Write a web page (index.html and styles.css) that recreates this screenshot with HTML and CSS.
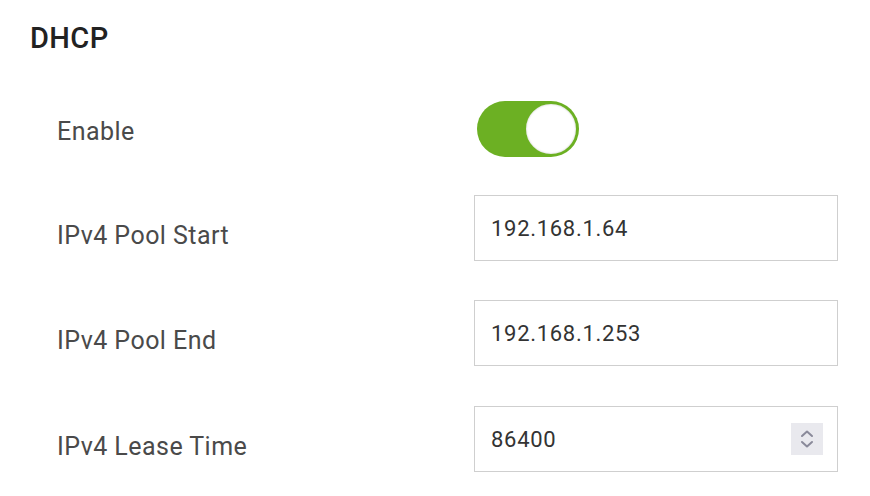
FILE: index.html
```html
<!DOCTYPE html>
<html>
<head>
<meta charset="utf-8">
<link rel="stylesheet" href="styles.css">
</head>
<body>
<div class="panel">
  <h2 class="title">DHCP</h2>
  <div class="form">
    <div class="row row-toggle">
      <div class="label">Enable</div>
      <div class="field">
        <div class="toggle"><div class="knob"></div></div>
      </div>
    </div>
    <div class="row">
      <div class="label label-input">IPv4 Pool Start</div>
      <div class="field"><div class="input">192.168.1.64</div></div>
    </div>
    <div class="row">
      <div class="label label-input">IPv4 Pool End</div>
      <div class="field"><div class="input">192.168.1.253</div></div>
    </div>
    <div class="row row-last">
      <div class="label label-input">IPv4 Lease Time</div>
      <div class="field">
        <div class="input input-number">
          <span>86400</span>
          <span class="spinner">
            <svg width="32" height="32" viewBox="0 0 32 32">
              <path d="M11 13 L16 8.5 L21 13" fill="none" stroke="#8a8a9a" stroke-width="2" stroke-linecap="round" stroke-linejoin="round"/>
              <path d="M11 19 L16 23.5 L21 19" fill="none" stroke="#8a8a9a" stroke-width="2" stroke-linecap="round" stroke-linejoin="round"/>
            </svg>
          </span>
        </div>
      </div>
    </div>
  </div>
</div>
</body>
</html>
```
FILE: styles.css
```css
html, body {
  margin: 0;
  padding: 0;
  background: #fff;
}
.panel {
  width: 870px;
  height: 496px;
  box-sizing: border-box;
  padding: 20px 0 0 30px;
  font-family: Roboto, "Noto Sans", sans-serif;
}
.title {
  margin: 0;
  font-size: 29px;
  font-weight: 500;
  line-height: 36px;
  color: #222;
  letter-spacing: 0.4px;
}
.form {
  display: flex;
  flex-direction: column;
  gap: 39px;
  margin-top: 45px;
  padding-left: 27px;
}
.row {
  display: flex;
  align-items: center;
}
.row-toggle {
  height: 56px;
  margin-bottom: -1px;
}
.row-last {
  margin-top: 1px;
}
.label {
  width: 417px;
  font-size: 25px;
  color: #4a4a4a;
  line-height: 30px;
  padding-top: 5px;
  letter-spacing: 0.45px;
}
.label-input {
  padding-top: 16px;
}
.field {
  flex: 0 0 auto;
}
.toggle {
  width: 102px;
  height: 56px;
  box-sizing: border-box;
  border-radius: 28px;
  background: #6cb023;
  margin-left: 3px;
  display: flex;
  justify-content: flex-end;
  align-items: center;
  padding-right: 1px;
}
.knob {
  width: 54px;
  height: 54px;
  border-radius: 50%;
  background: #fff;
  box-sizing: border-box;
  border: 2px solid #6cb023;
  box-shadow: inset 0 0 2px rgba(0,0,0,0.25);
}
.input {
  width: 364px;
  height: 66px;
  box-sizing: border-box;
  border: 1px solid #cfcfcf;
  padding-left: 16px;
  display: flex;
  align-items: center;
  font-size: 22px;
  color: #333;
  letter-spacing: 0.7px;
}
.input-number {
  justify-content: space-between;
  padding-right: 14px;
}
.spinner {
  width: 32px;
  height: 32px;
  background: #e9e9ee;
  display: flex;
}
```
